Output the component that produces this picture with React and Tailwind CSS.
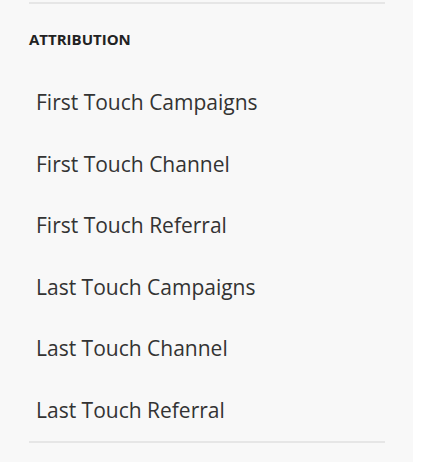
const items = [
  "First Touch Campaigns",
  "First Touch Channel",
  "First Touch Referral",
  "Last Touch Campaigns",
  "Last Touch Channel",
  "Last Touch Referral",
];

export default function App() {
  return (
    <div className="w-[426px] h-[462px] bg-white" style={{ fontFamily: '"Open Sans", sans-serif' }}>
      <div className="w-[413px] h-full bg-[#f8f8f8] pt-[2px] pl-[29px] pr-[28px]">
        <div className="border-t-2 border-[#e6e6e6]" />
        <h3 className="mt-[25px] text-[15px] font-bold text-[#222] leading-[20px]">ATTRIBUTION</h3>
        <ul className="mt-[39px] pl-[7px] flex flex-col gap-[33.6px]">
          {items.map((item) => (
            <li key={item} className="text-[21px] leading-[28px] text-[#333]">
              {item}
            </li>
          ))}
        </ul>
        <div className="mt-[17px] border-t-2 border-[#e6e6e6]" />
      </div>
    </div>
  );
}
